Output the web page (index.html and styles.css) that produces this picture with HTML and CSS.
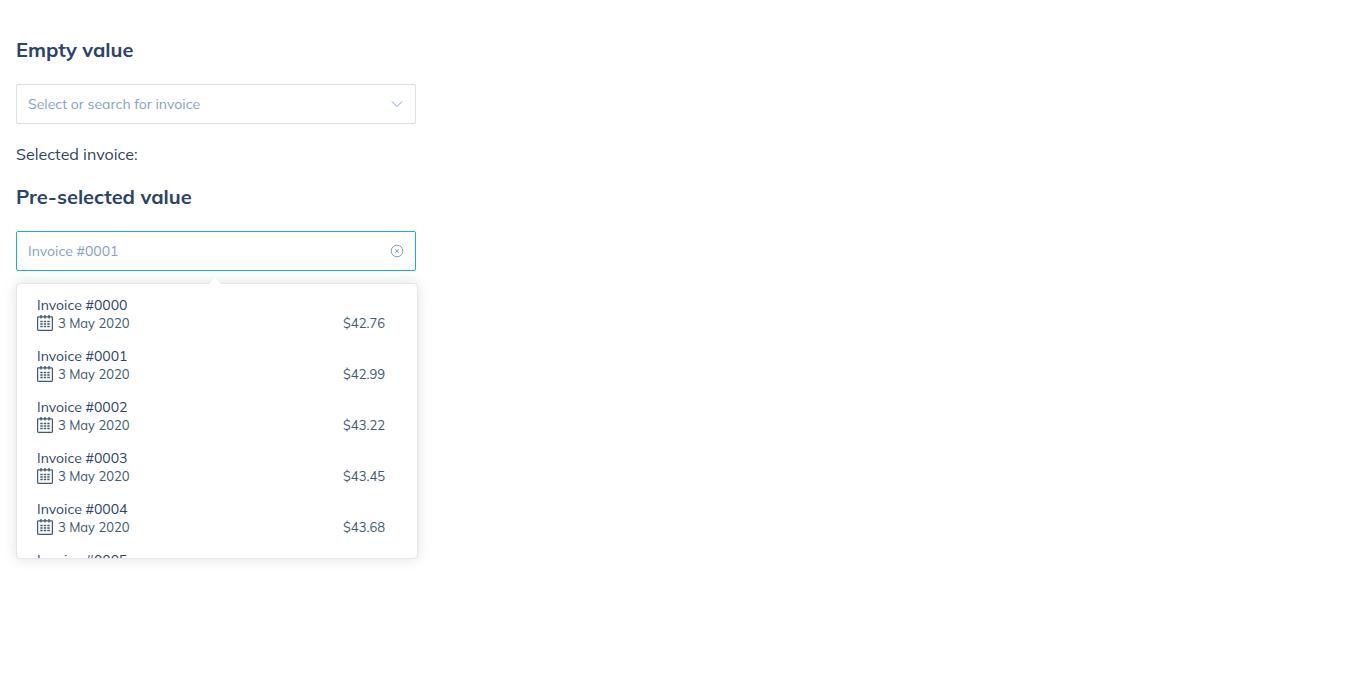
FILE: index.html
```html
<!DOCTYPE html>
<html lang="en">
<head>
<meta charset="utf-8">
<meta name="viewport" content="width=device-width, initial-scale=1">
<title>Invoice select</title>
<link rel="stylesheet" href="styles.css">
</head>
<body>
<svg class="sprite" aria-hidden="true">
  <symbol id="calendar" viewBox="0 0 16 16">
    <rect x=".6" y="1.8" width="14.8" height="13.6" rx=".8" fill="none" stroke="currentColor" stroke-width="1.2"/>
    <path d="M4 0v3.6M8 0v3.6M12 0v3.6" stroke="currentColor" stroke-width="1.4"/>
    <path d="M3.3 6.5h9.4M3.3 9h9.4M3.3 11.5h9.4" stroke="currentColor" stroke-width="1.5" stroke-dasharray="2.4 1.1"/>
  </symbol>
</svg>
<main class="page">
  <section class="section">
    <h2 class="title">Empty value</h2>
    <div class="select">
      <input class="select-input" type="text" role="combobox" aria-expanded="false" aria-label="Invoice" placeholder="Select or search for invoice">
      <svg class="select-icon" viewBox="0 0 14 14" aria-hidden="true"><path d="M2 4.5l5 5 5-5"/></svg>
    </div>
    <p class="result">Selected invoice:</p>
  </section>
  <section class="section">
    <h2 class="title">Pre-selected value</h2>
    <div class="select select-open">
      <input class="select-input" type="text" role="combobox" aria-expanded="true" aria-controls="invoices" aria-label="Pre-selected invoice" placeholder="Invoice #0001">
      <button class="clear" type="button" aria-label="Clear"><svg class="select-icon" viewBox="0 0 14 14" aria-hidden="true"><circle cx="7" cy="7" r="5.8"/><path d="M5.2 5.2l3.6 3.6M8.8 5.2l-3.6 3.6"/></svg></button>
    </div>
    <div class="dropdown">
      <ul class="options" id="invoices" role="listbox" aria-label="Invoices"></ul>
    </div>
  </section>
</main>
<script src="script.js"></script>
</body>
</html>
```
FILE: styles.css
```css
* { box-sizing: border-box; }
body {
  margin: 0;
  background: #fff;
  color: #2b4468;
  font-family: Muli, Mulish, Lato, "Noto Sans", sans-serif;
  font-size: 16px;
  line-height: 24px;
}
.sprite { display: none; }
.page { min-height: 100vh; padding: 38px 16px 16px; }
.title {
  margin: 0 0 22px;
  font-size: 20px;
  line-height: 24px;
  font-weight: 700;
}
.select {
  display: flex;
  align-items: center;
  width: 100%;
  max-width: 400px;
  height: 40px;
  padding: 0 11px;
  border: 1px solid #dbdfe8;
  border-radius: 2px;
}
.select-open { border-color: #1eaaea; }
.select-input {
  flex: 1;
  min-width: 0;
  padding: 0;
  border: 0;
  outline: 0;
  background: none;
  color: #2b4468;
  font: inherit;
  font-size: 14px;
}
.select-input::placeholder { color: #82a1c5; opacity: 1; }
.select-icon {
  display: block;
  width: 14px;
  height: 14px;
  fill: none;
  stroke: #82a1c5;
}
.clear { padding: 0; border: 0; background: none; }
.result { margin: 18px 0 19px; }
.dropdown {
  position: relative;
  width: 100%;
  max-width: 402px;
  margin-top: 12px;
  border: 1px solid #e2e4ee;
  border-radius: 4px;
  background: #fff;
  box-shadow: 0 0 14px rgba(0, 0, 0, .12);
}
.dropdown::before {
  content: "";
  position: absolute;
  top: -6px;
  left: calc(50% - 8px);
  border: 6px solid transparent;
  border-top: 0;
  border-bottom-color: #fff;
}
.options {
  max-height: 274px;
  margin: 0;
  padding: 4px 0;
  overflow: auto;
  list-style: none;
  scrollbar-width: none;
}
.option {
  padding: 8px 32px 7px 20px;
  font-size: 14px;
  line-height: 18px;
  cursor: pointer;
}
.details {
  display: flex;
  align-items: center;
  gap: 5px;
  color: #3d5b72;
  font-size: 13px;
}
.calendar { width: 16px; height: 16px; }
.amount { margin-left: auto; }
```
FILE: script.js
```js
const list = document.getElementById("invoices");
for (let i = 0; i < 6; i++) {
  const item = document.createElement("li");
  item.className = "option";
  item.setAttribute("role", "option");
  item.setAttribute("aria-selected", String(i === 1));
  const amount = (42.76 + i * 0.23).toFixed(2);
  item.innerHTML = `<div>Invoice #${String(i).padStart(4, "0")}</div>
    <div class="details"><svg class="calendar" aria-hidden="true"><use href="#calendar"/></svg><span>3 May 2020</span><span class="amount">$${amount}</span></div>`;
  list.append(item);
}
```
